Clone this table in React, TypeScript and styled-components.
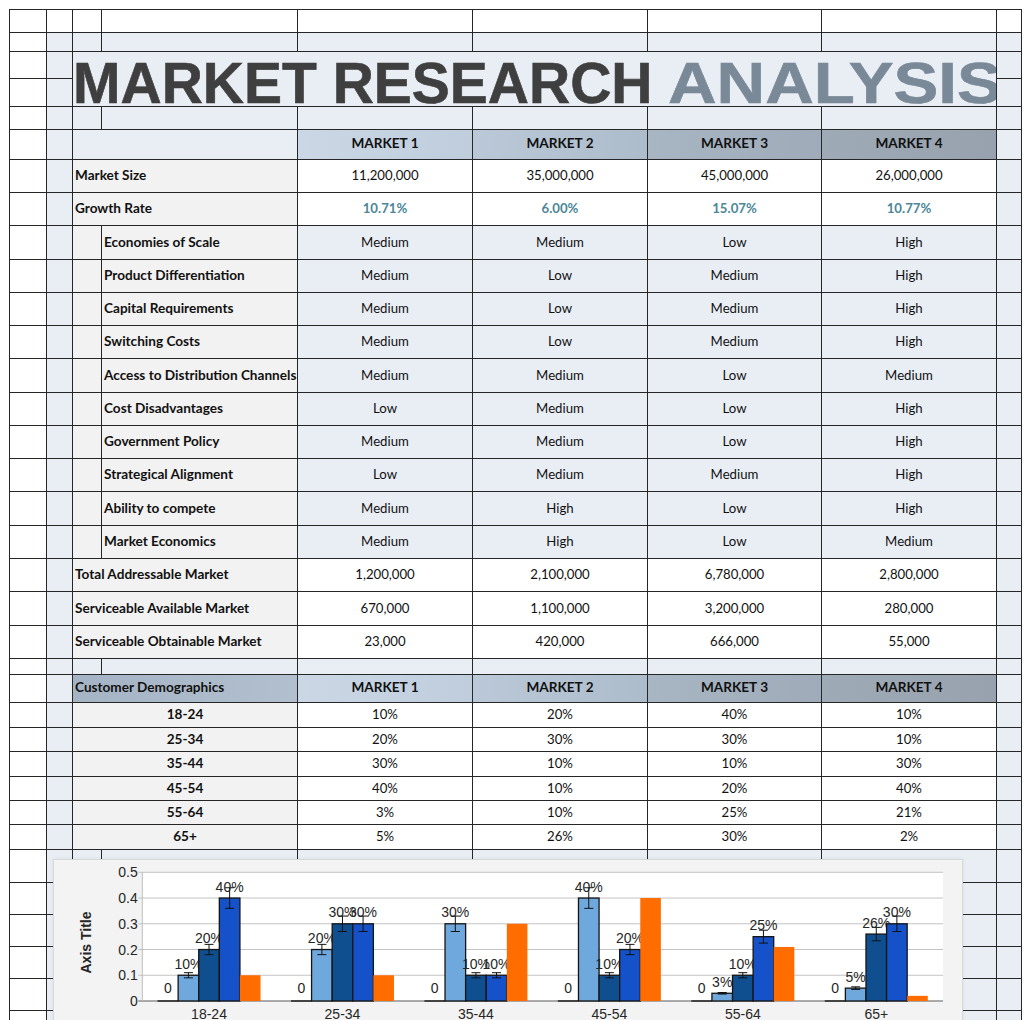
import React from "react";
import styled, { createGlobalStyle } from "styled-components";

const GlobalStyle = createGlobalStyle`
  html, body { margin: 0; padding: 0; background: #ffffff; overflow: hidden; }
  body { padding: 9px 0 0 9px; font-family: Lato, "Open Sans", sans-serif; color: #111; }
`;

const COLS = [36, 25, 28, 195, 174, 174, 173, 174, 24];
const YL = [
  9, 32, 51, 78, 106, 129, 159, 192, 225, 259, 292, 325, 358, 392, 425, 458, 491, 525, 558, 591, 625,
  658, 674, 702, 727, 751, 776, 800, 824, 849, 882, 914, 946, 978, 1010, 1042,
];
const ROWS = YL.slice(1).map((y, i) => y - YL[i] - 1);

const SHEET_BG = "#e9eef5";
const LABEL_BG = "#f2f2f2";

const Sheet = styled.div`
  position: relative;
  display: grid;
  grid-template-columns: ${COLS.map((c) => `${c}px`).join(" ")};
  grid-template-rows: ${ROWS.map((r) => `${r}px`).join(" ")};
  gap: 1px;
  padding: 1px;
  width: max-content;
  background: #262626;
`;

const Blank = styled.div<{ $white?: boolean; $span?: number }>`
  grid-column: span ${(p) => p.$span ?? 1};
  background: ${(p) => (p.$white ? "#ffffff" : SHEET_BG)};
`;

const TitleCell = styled.div`
  grid-column: span 6;
  grid-row: span 2;
  background: ${SHEET_BG};
  overflow: hidden;
  white-space: nowrap;
  padding-top: 3px;
  font-family: "Liberation Sans", Arial, sans-serif;
  font-weight: 700;
  font-size: 57px;
  line-height: 57px;
  color: #3f3f3f;
  -webkit-text-stroke: 0.6px #3f3f3f;
`;

const TitleAccent = styled.span`
  display: inline-block;
  color: #7a8997;
  -webkit-text-stroke: 0.6px #7a8997;
  transform: scaleX(1.18);
  transform-origin: left center;
`;

const LabelCell = styled.div<{ $span?: number; $center?: boolean }>`
  grid-column: span ${(p) => p.$span ?? 1};
  background: ${LABEL_BG};
  display: flex;
  align-items: center;
  justify-content: ${(p) => (p.$center ? "center" : "flex-start")};
  padding-left: ${(p) => (p.$center ? 0 : 2)}px;
  padding-bottom: 2px;
  font-size: 13.6px;
  font-weight: 700;
  white-space: nowrap;
  overflow: hidden;
  color: #111;
`;

const IndentCell = styled.div`
  background: ${LABEL_BG};
`;

const ValueCell = styled.div<{ $shaded?: boolean; $accent?: boolean }>`
  background: ${(p) => (p.$shaded ? SHEET_BG : "#ffffff")};
  display: flex;
  align-items: center;
  justify-content: center;
  padding-bottom: 2px;
  font-size: 13.2px;
  font-weight: ${(p) => (p.$accent ? 700 : 400)};
  color: ${(p) => (p.$accent ? "#4b8796" : "#111")};
  white-space: nowrap;
`;

const HeaderCell = styled.div<{ $from: string; $to: string; $span?: number; $left?: boolean }>`
  grid-column: span ${(p) => p.$span ?? 1};
  background: linear-gradient(90deg, ${(p) => p.$from}, ${(p) => p.$to});
  display: flex;
  align-items: center;
  justify-content: ${(p) => (p.$left ? "flex-start" : "center")};
  padding-left: ${(p) => (p.$left ? 2 : 0)}px;
  padding-bottom: 3px;
  font-size: 13.6px;
  font-weight: 700;
  color: #111;
  white-space: nowrap;
`;

const HEAD: [string, string][] = [
  ["#cbd7e5", "#bfcddc"],
  ["#bac8d8", "#adbccb"],
  ["#a8b5c3", "#9fabb9"],
  ["#9eaab6", "#97a2ae"],
];

const MARKETS = ["MARKET 1", "MARKET 2", "MARKET 3", "MARKET 4"];

const TOP_ROWS: { label: string; values: string[]; accent?: boolean }[] = [
  { label: "Market Size", values: ["11,200,000", "35,000,000", "45,000,000", "26,000,000"] },
  { label: "Growth Rate", values: ["10.71%", "6.00%", "15.07%", "10.77%"], accent: true },
];

const FACTORS: { label: string; values: string[] }[] = [
  { label: "Economies of Scale", values: ["Medium", "Medium", "Low", "High"] },
  { label: "Product Differentiation", values: ["Medium", "Low", "Medium", "High"] },
  { label: "Capital Requirements", values: ["Medium", "Low", "Medium", "High"] },
  { label: "Switching Costs", values: ["Medium", "Low", "Medium", "High"] },
  { label: "Access to Distribution Channels", values: ["Medium", "Medium", "Low", "Medium"] },
  { label: "Cost Disadvantages", values: ["Low", "Medium", "Low", "High"] },
  { label: "Government Policy", values: ["Medium", "Medium", "Low", "High"] },
  { label: "Strategical Alignment", values: ["Low", "Medium", "Medium", "High"] },
  { label: "Ability to compete", values: ["Medium", "High", "Low", "High"] },
  { label: "Market Economics", values: ["Medium", "High", "Low", "Medium"] },
];

const MARKET_ROWS: { label: string; values: string[] }[] = [
  { label: "Total Addressable Market", values: ["1,200,000", "2,100,000", "6,780,000", "2,800,000"] },
  { label: "Serviceable Available Market", values: ["670,000", "1,100,000", "3,200,000", "280,000"] },
  { label: "Serviceable Obtainable Market", values: ["23,000", "420,000", "666,000", "55,000"] },
];

const DEMO: { label: string; values: number[] }[] = [
  { label: "18-24", values: [0.1, 0.2, 0.4, 0.1] },
  { label: "25-34", values: [0.2, 0.3, 0.3, 0.1] },
  { label: "35-44", values: [0.3, 0.1, 0.1, 0.3] },
  { label: "45-54", values: [0.4, 0.1, 0.2, 0.4] },
  { label: "55-64", values: [0.03, 0.1, 0.25, 0.21] },
  { label: "65+", values: [0.05, 0.26, 0.3, 0.02] },
];

const pct = (v: number) => `${Math.round(v * 100)}%`;

/* ---------- Chart ---------- */

const ChartBox = styled.div`
  position: absolute;
  left: 44px;
  top: 850px;
  width: 908px;
  height: 200px;
  background: #f3f3f3;
  border: 1px solid #d8d8d8;
  box-shadow: 0 0 3px rgba(0, 0, 0, 0.08);
`;

const ChartSvg = styled.svg`
  display: block;
  font-family: "Liberation Sans", Arial, sans-serif;
`;

const PL = 88.3;
const PR = 889;
const Y0 = 141;
const SCALE = 257.4;
const GW = (PR - PL) / 6;
const BW = 20.6;
const yOf = (v: number) => Y0 - v * SCALE;
const COLORS = ["#6fa8dc", "#0f4f8f", "#1551c8"];
const ORANGE = "#ff6d00";

function Chart() {
  const grid = [0, 0.1, 0.2, 0.3, 0.4, 0.5];
  return (
    <ChartBox>
      <ChartSvg width={906} height={198} viewBox="0 0 906 198">
        <rect x={PL} y={yOf(0.5)} width={PR - PL} height={Y0 - yOf(0.5)} fill="#ffffff" />
        {grid.map((g) => (
          <g key={g}>
            <line x1={PL - 4} x2={PR} y1={yOf(g)} y2={yOf(g)} stroke={g === 0 ? "#8f8f8f" : "#c4c4c4"} strokeWidth={g === 0 ? 1.5 : 1} />
            <text x={83.7} y={yOf(g) + 5} textAnchor="end" fontSize={14} fill="#262626">
              {g === 0 ? "0" : g.toFixed(1)}
            </text>
          </g>
        ))}
        <line x1={PL} x2={PL} y1={yOf(0.5)} y2={Y0} stroke="#bdbdbd" />
        <text
          x={32}
          y={82.5}
          transform="rotate(-90 32 82.5)"
          textAnchor="middle"
          dominantBaseline="central"
          fontSize={14}
          fontWeight={700}
          fill="#262626"
        >
          Axis Title
        </text>
        {DEMO.map((d, i) => {
          const gx = PL + i * GW + (GW - 5 * BW) / 2;
          const cx = PL + i * GW + GW / 2;
          return (
            <g key={d.label}>
              <line x1={gx} x2={gx + BW} y1={Y0} y2={Y0} stroke="#222" strokeWidth={1.5} />
              <text x={gx + BW / 2} y={Y0 - 8} textAnchor="middle" fontSize={14} fill="#262626">
                0
              </text>
              {d.values.slice(0, 3).map((v, s) => {
                const x = gx + (s + 1) * BW;
                const bx = x + BW / 2;
                return (
                  <g key={s}>
                    <rect x={x} y={yOf(v)} width={BW} height={v * SCALE} fill={COLORS[s]} stroke="#151515" strokeWidth={1.3} />
                    <line x1={bx} x2={bx} y1={yOf(v * 1.1)} y2={yOf(v * 0.9)} stroke="#111" strokeWidth={1} />
                    <line x1={bx - 4.5} x2={bx + 4.5} y1={yOf(v * 1.1)} y2={yOf(v * 1.1)} stroke="#111" strokeWidth={1} />
                    <line x1={bx - 4.5} x2={bx + 4.5} y1={yOf(v * 0.9)} y2={yOf(v * 0.9)} stroke="#111" strokeWidth={1} />
                    <text x={bx} y={yOf(v) - 6.5} textAnchor="middle" fontSize={14} fill="#262626">
                      {pct(v)}
                    </text>
                  </g>
                );
              })}
              <rect x={gx + 4 * BW} y={yOf(d.values[3])} width={BW} height={d.values[3] * SCALE} fill={ORANGE} />
              <text x={cx} y={159.3} textAnchor="middle" fontSize={14} fill="#262626">
                {d.label}
              </text>
            </g>
          );
        })}
      </ChartSvg>
    </ChartBox>
  );
}

/* ---------- Rows ---------- */

function EmptyRow({ white }: { white?: boolean }) {
  return (
    <>
      <Blank $white />
      {Array.from({ length: 8 }).map((_, i) => (
        <Blank key={i} $white={white} />
      ))}
    </>
  );
}

export default function App() {
  return (
    <>
      <GlobalStyle />
      <Sheet>
        <EmptyRow white />
        <EmptyRow />
        {/* title rows */}
        <Blank $white />
        <Blank />
        <TitleCell>
          MARKET RESEARCH <TitleAccent>ANALYSIS</TitleAccent>
        </TitleCell>
        <Blank />
        <Blank $white />
        <Blank />
        <Blank />
        <EmptyRow />
        {/* header */}
        <Blank $white />
        <Blank />
        <Blank $span={2} />
        {MARKETS.map((m, i) => (
          <HeaderCell key={m} $from={HEAD[i][0]} $to={HEAD[i][1]}>
            {m}
          </HeaderCell>
        ))}
        <Blank />
        {TOP_ROWS.map((r) => (
          <React.Fragment key={r.label}>
            <Blank $white />
            <Blank />
            <LabelCell $span={2}>{r.label}</LabelCell>
            {r.values.map((v, i) => (
              <ValueCell key={i} $accent={r.accent}>
                {v}
              </ValueCell>
            ))}
            <Blank />
          </React.Fragment>
        ))}
        {FACTORS.map((r) => (
          <React.Fragment key={r.label}>
            <Blank $white />
            <Blank />
            <IndentCell />
            <LabelCell>{r.label}</LabelCell>
            {r.values.map((v, i) => (
              <ValueCell key={i} $shaded>
                {v}
              </ValueCell>
            ))}
            <Blank />
          </React.Fragment>
        ))}
        {MARKET_ROWS.map((r) => (
          <React.Fragment key={r.label}>
            <Blank $white />
            <Blank />
            <LabelCell $span={2}>{r.label}</LabelCell>
            {r.values.map((v, i) => (
              <ValueCell key={i}>{v}</ValueCell>
            ))}
            <Blank />
          </React.Fragment>
        ))}
        <EmptyRow />
        {/* demographics header */}
        <Blank $white />
        <Blank />
        <HeaderCell $span={2} $left $from="#a5b4c5" $to="#b1bfce">
          Customer Demographics
        </HeaderCell>
        {MARKETS.map((m, i) => (
          <HeaderCell key={m} $from={HEAD[i][0]} $to={HEAD[i][1]}>
            {m}
          </HeaderCell>
        ))}
        <Blank />
        {DEMO.map((r) => (
          <React.Fragment key={r.label}>
            <Blank $white />
            <Blank />
            <LabelCell $span={2} $center>
              {r.label}
            </LabelCell>
            {r.values.map((v, i) => (
              <ValueCell key={i}>{pct(v)}</ValueCell>
            ))}
            <Blank />
          </React.Fragment>
        ))}
        {Array.from({ length: 6 }).map((_, i) => (
          <EmptyRow key={i} />
        ))}
        <Chart />
      </Sheet>
    </>
  );
}
